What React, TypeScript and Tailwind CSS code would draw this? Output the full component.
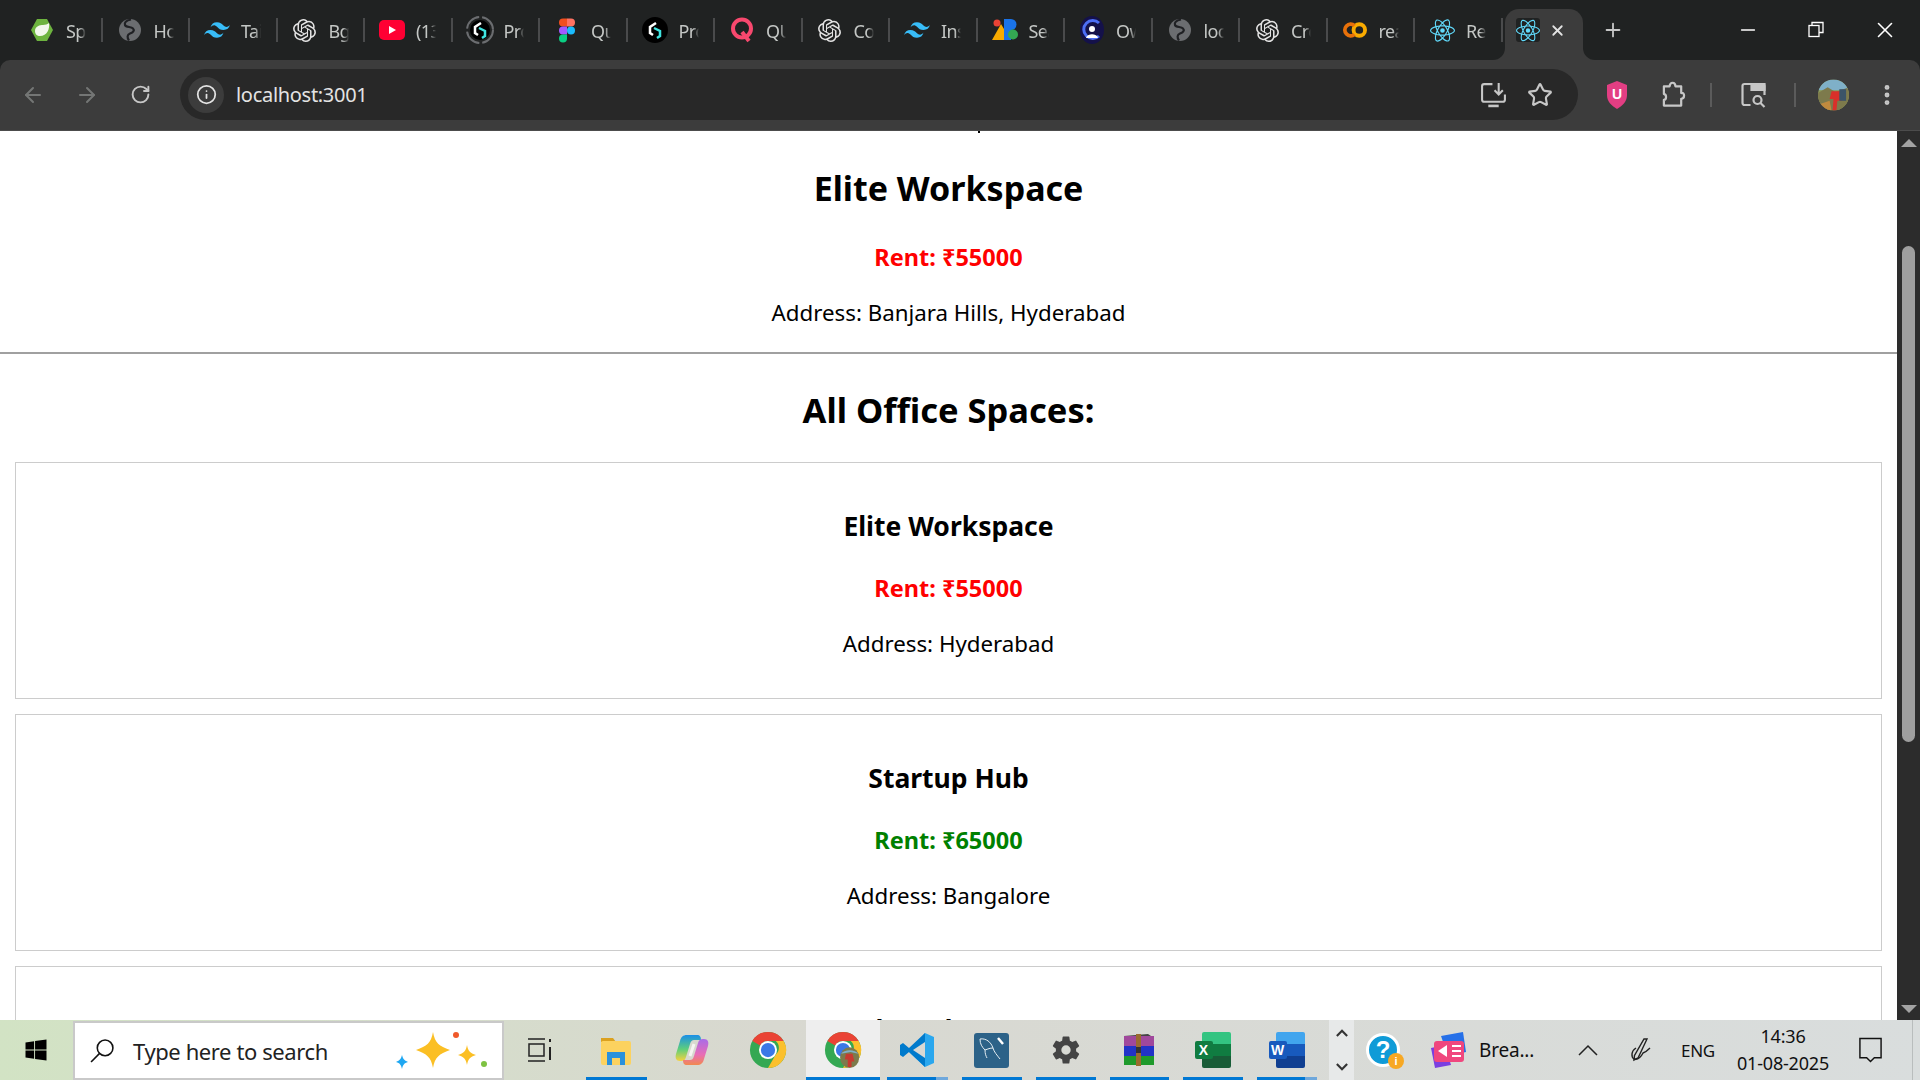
import React from 'react';
import { ArrowLeft, ArrowRight, RotateCw, Info, Star, EllipsisVertical, X, Plus, Minus } from 'lucide-react';
import { SiOpenai, SiTailwindcss, SiReact } from 'react-icons/si';
import { FaWindows } from 'react-icons/fa';
import { IoSettingsSharp } from 'react-icons/io5';

const pageFont = "font-['Noto_Sans',sans-serif]";

function Globe() {
    return (
        <svg viewBox="0 0 24 24" className="w-[24px] h-[24px]">
            <circle cx="12" cy="12" r="11" fill="#6b6d70" />
            <path d="M13 1.500c-5 1-7 3-6 5.500s6 1.500 8 3.500 0 4-3 5-3 4-1 7" fill="none" stroke="#202124" strokeWidth="2.200" />
        </svg>
    );
}

function Spring() {
    return (
        <svg viewBox="0 0 24 24" className="w-[24px] h-[24px]">
            <path d="M7 1h10l6 11-6 11H7L1 12z" fill="#6db33f" />
            <path d="M19 5c1 6-2 13-9 13-3 0-5-2-5-5 0-5 5-6 8-6 2 0 5-1 6-2z" fill="#f2f7ec" />
        </svg>
    );
}

function LogoG({ ring }: { ring?: boolean }) {
    return (
        <svg viewBox="0 0 28 28" className="w-[28px] h-[28px]">
            {ring && <circle cx="14" cy="14" r="13" fill="none" stroke="#6b6d70" strokeWidth="2" strokeDasharray="18 3" />}
            <circle cx="14" cy="14" r={ring ? 10 : 13} fill="#000" />
            <path d="M15 7l-6 4v6l3 2" fill="none" stroke="#fff" strokeWidth="2.500" />
            <path d="M13 12l6 3v5l-3 2" fill="none" stroke="#3fe4e0" strokeWidth="2.500" />
        </svg>
    );
}

function Youtube() {
    return (
        <svg viewBox="0 0 26 22" className="w-[26px] h-[22px]">
            <rect width="26" height="20" y="1" rx="5" fill="#ff0033" />
            <path d="M10 7l7 4-7 4z" fill="#fff" />
        </svg>
    );
}

function Figma() {
    return (
        <svg viewBox="0 0 16 24" className="w-[16px] h-[25px]">
            <path d="M0 4a4 4 0 0 1 4-4h4v8H4a4 4 0 0 1-4-4z" fill="#f24e1e" />
            <path d="M8 0h4a4 4 0 0 1 0 8H8z" fill="#ff7262" />
            <path d="M0 12a4 4 0 0 1 4-4h4v8H4a4 4 0 0 1-4-4z" fill="#a259ff" />
            <circle cx="12" cy="12" r="4" fill="#1abcfe" />
            <path d="M0 20a4 4 0 0 1 4-4h4v4a4 4 0 0 1-8 0z" fill="#0acf83" />
        </svg>
    );
}

function QLogo() {
    return (
        <svg viewBox="0 0 24 26" className="w-[24px] h-[26px]">
            <circle cx="12" cy="11.500" r="9" fill="none" stroke="#f8486e" strokeWidth="4" />
            <path d="M12 15l7 9" stroke="#f8486e" strokeWidth="4" />
        </svg>
    );
}

function SeoLogo() {
    return (
        <svg viewBox="0 0 26 22" className="w-[26px] h-[22px]">
            <path d="M0 21L9 5l3 5v11z" fill="#f9ab00" />
            <circle cx="5" cy="4" r="3.500" fill="#ea4335" />
            <path d="M12 0h7a5 5 0 0 1 0 11h-7z" fill="#1a73e8" />
            <path d="M12 11h7v10h-7z" fill="#1a73e8" />
            <circle cx="21" cy="15.500" r="5" fill="#34a853" />
        </svg>
    );
}

function OwnerLogo() {
    return (
        <svg viewBox="0 0 24 28" className="w-[24px] h-[28px]">
            <ellipse cx="12" cy="14" rx="12" ry="14" fill="#14114a" />
            <path d="M19 7a9 9 0 1 0 0 13" fill="none" stroke="#4c6ef5" strokeWidth="3" />
            <circle cx="12" cy="13" r="3" fill="#fff" />
            <path d="M6 22c1-5 11-5 12 0z" fill="#fff" />
        </svg>
    );
}

function Tailwind() {
    return <SiTailwindcss className="w-[26px] h-[26px] text-[#38bdf8]" />;
}

function Knot() {
    return <SiOpenai className="w-[23px] h-[23px] text-[#e3e3e3]" />;
}

function ReactLogo() {
    return <SiReact className="w-[25px] h-[25px] text-[#61dafb]" />;
}

function Colab() {
    return (
        <svg viewBox="0 0 26 16" className="w-[25px] h-[16px]" fill="none" strokeWidth="4">
            <circle cx="18" cy="8" r="6" stroke="#f9ab00" />
            <path d="M13 3.500a6 6 0 1 0 0 9" stroke="#e8710a" />
        </svg>
    );
}

const tabs = [
    { icon: <Spring />, label: 'Spring' },
    { icon: <Globe />, label: 'Home' },
    { icon: <Tailwind />, label: 'Tailwind' },
    { icon: <Knot />, label: 'Bg' },
    { icon: <Youtube />, label: '(13' },
    { icon: <LogoG ring />, label: 'Profile' },
    { icon: <Figma />, label: 'Quiz' },
    { icon: <LogoG />, label: 'Profile' },
    { icon: <QLogo />, label: 'QUIZ' },
    { icon: <Knot />, label: 'Code' },
    { icon: <Tailwind />, label: 'Install' },
    { icon: <SeoLogo />, label: 'Search' },
    { icon: <OwnerLogo />, label: 'Owner' },
    { icon: <Globe />, label: 'local' },
    { icon: <Knot />, label: 'Create' },
    { icon: <Colab />, label: 'react' },
    { icon: <ReactLogo />, label: 'React' },
];

function TabStrip() {
    return (
        <div className="h-[60px] bg-[#202222] flex items-end pl-[15px] font-['Noto_Sans',sans-serif]">
            {tabs.map((tab, i) => (
                <div key={i} className="w-[87.500px] h-[60px] shrink-0 flex items-center">
                    <div className="w-[54px] flex justify-center">{tab.icon}</div>
                    <div className="-ml-[3px] w-[20px] overflow-hidden whitespace-nowrap text-[18px] tracking-[-0.6px] text-[#c4c7c5] pt-[2px] [mask-image:linear-gradient(to_right,black_70%,transparent)]">{tab.label}</div>
                    <div className="ml-auto w-[2px] h-[24px] bg-[#4a4b4c]" />
                </div>
            ))}
            {/* Active tab */}
            <div className="relative ml-[2.500px] w-[78px] h-[51px] shrink-0 bg-[#3c3c3c] rounded-t-[14px] flex items-start pt-[9px] pl-[11px] gap-[9px]">
                <div className="absolute -left-[12px] bottom-0 w-[12px] h-[12px] bg-[#3c3c3c]"><div className="w-full h-full bg-[#202222] rounded-br-[12px]" /></div>
                <div className="absolute -right-[12px] bottom-0 w-[12px] h-[12px] bg-[#3c3c3c]"><div className="w-full h-full bg-[#202222] rounded-bl-[12px]" /></div>
                <div className="w-[24px] h-[24px] bg-[#202222] rounded-[3px] flex items-center justify-center"><ReactLogo /></div>
                <X size={17} strokeWidth={2.500} className="text-[#e3e3e3] mt-[4px]" />
            </div>
            <div className="self-stretch flex items-center ml-[15px] w-[30px] justify-center">
                <Plus size={22} className="text-[#c7c7c7]" />
            </div>
            {/* Window controls */}
            <div className="ml-auto self-stretch flex items-center pb-[1px]">
                <div className="w-[68px] flex justify-center"><Minus size={22} strokeWidth={1.500} className="text-white" /></div>
                <div className="w-[68px] flex justify-center">
                    <svg viewBox="0 0 16 16" className="w-[16px] h-[17px]" fill="none" stroke="#fff" strokeWidth="1.300">
                        <rect x="1" y="4" width="10" height="11" />
                        <path d="M4 4V1h11v10h-4" />
                    </svg>
                </div>
                <div className="w-[70px] flex justify-center"><X size={26} strokeWidth={1.500} className="text-white" /></div>
            </div>
        </div>
    );
}

function Toolbar() {
    return (
        <div className="h-[71px] bg-[#3c3c3c] rounded-t-[10px] border-b border-[#4c4c4c] flex items-center pb-[1px] text-[#c7c7c7]">
            <div className="w-[180px] flex items-center">
                <div className="w-[60px] flex justify-center pl-[6px]"><ArrowLeft size={24} className="text-[#747675]" /></div>
                <div className="w-[50px] flex justify-center pl-[3px]"><ArrowRight size={24} className="text-[#747675]" /></div>
                <div className="w-[60px] flex justify-center"><RotateCw size={21} strokeWidth={2.200} className="text-[#c7c7c7]" /></div>
            </div>
            {/* Address bar */}
            <div className="w-[1398px] h-[51px] rounded-full bg-[#282828] flex items-center pl-[8px] pr-[25px]">
                <div className="w-[36px] h-[36px] rounded-full bg-[#3c3c3c] flex items-center justify-center">
                    <Info size={21} className="text-[#e3e3e3]" />
                </div>
                <span className="ml-[12px] text-[20px] tracking-[-0.3px] text-[#e3e3e3] font-['Noto_Sans',sans-serif]">localhost:3001</span>
                <div className="ml-auto flex items-center gap-[20px]">
                    <svg viewBox="0 0 26 26" className="w-[27px] h-[27px]" fill="none" stroke="#c7c7c7" strokeWidth="2">
                        <path d="M12 3H4a2 2 0 0 0-2 2v13a2 2 0 0 0 2 2h18a2 2 0 0 0 2-2v-5" />
                        <path d="M8 24h10" strokeWidth="2.500" />
                        <path d="M18 2v11M14 9l4 4 4-4" />
                    </svg>
                    <Star size={26} strokeWidth={2} />
                </div>
            </div>
            {/* Extensions and profile */}
            <div className="w-[78px] flex justify-end pr-[28px]">
                <svg viewBox="0 0 22 28" className="w-[22px] h-[28px]">
                    <path d="M11 0l10 4v10c0 7-5 11-10 14C6 25 1 21 1 14V4z" fill="#e33e83" />
                    <text x="11" y="18" textAnchor="middle" fontSize="14" fontWeight="700" fill="#fff" fontFamily="Liberation Sans, sans-serif">U</text>
                </svg>
            </div>
            <div className="w-[34px] flex justify-center">
                <svg viewBox="0 0 26 28" className="w-[25px] h-[28px] shrink-0" fill="none" stroke="#c7c7c7" strokeWidth="2.300">
                    <path d="M3 5h6c0-5 6-5 6 0h6v7c4-1 4 6 0 6v7H3v-6c3 0 3-6 0-6z" strokeLinejoin="round" />
                </svg>
            </div>
            <div className="w-[2px] h-[24px] bg-[#5b5b5b] ml-[20px]" />
            <div className="w-[82px] flex justify-center">
                <svg viewBox="0 0 26 26" className="w-[27px] h-[26px]" fill="none" stroke="#c7c7c7" strokeWidth="2.200">
                    <path d="M10 23H4a2 2 0 0 1-2-2V4a2 2 0 0 1 2-2h18a2 2 0 0 1 2 2v9" />
                    <path d="M11 2h13v6H11z" fill="#c7c7c7" />
                    <circle cx="17" cy="18" r="4" />
                    <path d="M20 21l4 4" />
                </svg>
            </div>
            <div className="w-[2px] h-[24px] bg-[#5b5b5b]" />
            <div className="w-[75px] flex justify-center">
                <svg viewBox="0 0 32 32" className="w-[31px] h-[32px]">
                    <defs>
                        <clipPath id="avatar"><circle cx="16" cy="16" r="16" /></clipPath>
                    </defs>
                    <g clipPath="url(#avatar)">
                        <rect width="32" height="32" fill="#8c9a5a" />
                        <rect width="32" height="11" fill="#7fb0c8" />
                        <path d="M0 14l10-6 8 5 14-5v24H0z" fill="#7d7a4c" />
                        <path d="M14 12h9l2 10h-5l-1 10h-4l1-12h-4z" fill="#d9302a" />
                        <rect x="22" y="10" width="7" height="12" fill="#3b5468" />
                        <path d="M0 26l12-4 2 10H0z" fill="#c08a3e" />
                    </g>
                </svg>
            </div>
            <div className="flex justify-center ml-[3px]"><EllipsisVertical size={26} strokeWidth={2.500} /></div>
        </div>
    );
}

function RentCard({ name, rent, address, rentClass }: { name: string; rent: string; address: string; rentClass: string }) {
    return (
        <div className="h-[237px] border border-[#cccccc] mb-[15px] pt-[41px] text-center">
            <h3 className="text-[26.500px] leading-[44px] font-bold">{name}</h3>
            <p className={`mt-[24px] text-[23.500px] leading-[32px] font-bold ${rentClass}`}>{rent}</p>
            <p className="mt-[24px] text-[22.300px] leading-[32px]">{address}</p>
        </div>
    );
}

function Page() {
    return (
        <div className={`flex-1 min-w-0 overflow-hidden bg-white text-black ${pageFont}`}>
            <div className="flex justify-center"><div className="w-[2px] h-[2px] bg-black ml-[60px]" /></div>
            <div className="text-center pt-[31px]">
                <h2 className="text-[34px] leading-[48px] font-bold">Elite Workspace</h2>
                <p className="mt-[29px] text-[23.500px] leading-[32px] font-bold text-[#ff0000]">Rent: ₹55000</p>
                <p className="mt-[24px] text-[22.300px] leading-[32px]">Address: Banjara Hills, Hyderabad</p>
            </div>
            <div className="mt-[23px] border-t-2 border-[#a0a0a0]" />
            <h2 className="mt-[32px] text-center text-[34.500px] leading-[48px] font-bold">All Office Spaces:</h2>
            <div className="mt-[28px] pl-[15px] pr-[15px]">
                <RentCard name="Elite Workspace" rent="Rent: ₹55000" address="Address: Hyderabad" rentClass="text-[#ff0000]" />
                <RentCard name="Startup Hub" rent="Rent: ₹65000" address="Address: Bangalore" rentClass="text-[#008000]" />
                <RentCard name="Shared Space" rent="Rent: ₹70000" address="Address: Chennai" rentClass="text-[#008000]" />
            </div>
        </div>
    );
}

function Scrollbar() {
    return (
        <div className="w-[23px] shrink-0 bg-[#2c2c2c] flex flex-col items-center pt-[8px] pb-[7px]">
            <div className="w-0 h-0 border-l-[8px] border-r-[8px] border-b-[8px] border-l-transparent border-r-transparent border-b-[#a3a3a3]" />
            <div className="mt-[99px] w-[13px] h-[496px] rounded-full bg-[#9f9f9f]" />
            <div className="mt-auto w-0 h-0 border-l-[8px] border-r-[8px] border-t-[8px] border-l-transparent border-r-transparent border-t-[#a3a3a3]" />
        </div>
    );
}

function Sparkles() {
    return (
        <svg viewBox="0 0 100 50" className="w-[100px] h-[50px]">
            <path d="M45 7c2 11 6 14 17 18-11 4-15 7-17 18-2-11-6-14-17-18 11-4 15-7 17-18z" fill="#fbbf24" />
            <path d="M79 20c1 6 3 8 9 10-6 2-8 4-9 10-1-6-3-8-9-10 6-2 8-4 9-10z" fill="#fbbf24" />
            <path d="M14 30c1 4 2 5 6 7-4 1-5 3-6 7-1-4-2-6-6-7 4-2 5-3 6-7z" fill="#1ea7f2" />
            <circle cx="68" cy="10" r="3" fill="#f0592a" />
            <circle cx="96" cy="39" r="3" fill="#7ec242" />
        </svg>
    );
}

function Chrome({ avatar }: { avatar?: boolean }) {
    return (
        <svg viewBox="0 0 40 40" className="w-[38px] h-[38px]">
            <circle cx="20" cy="20" r="19" fill="#34a853" />
            <path d="M20 1a19 19 0 0 1 16.500 9.500H20a9.500 9.500 0 0 0-8.200 4.700L3.500 10.500A19 19 0 0 1 20 1z" fill="#ea4335" />
            <path d="M36.500 10.500A19 19 0 0 1 20 39l8.200-14.200a9.500 9.500 0 0 0 0-14.300z" fill="#fbc02d" />
            <circle cx="20" cy="20" r="9.500" fill="#fff" />
            <circle cx="20" cy="20" r="7.500" fill="#3b78e7" />
            {avatar && (
                <g>
                    <ellipse cx="27" cy="28" rx="10" ry="11" fill="#7d7a4c" />
                    <path d="M23 24h7l2 8h-3v6h-4v-8h-3z" fill="#c73a30" />
                    <path d="M18 24c3-5 15-5 18 0l-8-2z" fill="#7fb0c8" />
                </g>
            )}
        </svg>
    );
}

function Copilot() {
    return (
        <svg viewBox="0 0 36 36" className="w-[36px] h-[36px]">
            <defs>
                <linearGradient id="cp1" x1="0" y1="0" x2="0" y2="1"><stop offset="0" stopColor="#1a8fe8" /><stop offset="0.55" stopColor="#5fcf7a" /><stop offset="1" stopColor="#f6d23f" /></linearGradient>
                <linearGradient id="cp2" x1="0" y1="0" x2="0" y2="1"><stop offset="0" stopColor="#a86de8" /><stop offset="0.6" stopColor="#e86db6" /><stop offset="1" stopColor="#f2894f" /></linearGradient>
            </defs>
            <path d="M13 3h10c3 0 4 2 4 5H20c-2 0-3 1-4 4l-4 13c-1 3-2 4-5 4H6c-4 0-5-3-4-7l4-13C7 5 9 3 13 3z" fill="url(#cp1)" />
            <path d="M23 33H13c-3 0-4-2-4-5h7c2 0 3-1 4-4l4-13c1-3 2-4 5-4h1c4 0 5 3 4 7l-4 13c-1 4-3 6-7 6z" fill="url(#cp2)" />
            <path d="M20 12l-4 12" stroke="#f5f5f2" strokeWidth="3" />
        </svg>
    );
}

function Office({ letter, dark, mid, light, tile }: { letter: string; dark: string; mid: string; light: string; tile: string }) {
    return (
        <div className="relative w-[36px] h-[36px]">
            <div className="absolute left-[7px] top-0 right-0 bottom-0 rounded-[2px] overflow-hidden flex flex-col">
                <div className="flex-1" style={{ background: light }} />
                <div className="flex-1" style={{ background: mid }} />
                <div className="flex-1" style={{ background: dark }} />
            </div>
            <div className="absolute left-0 top-[9px] w-[18px] h-[18px] rounded-[2px] flex items-center justify-center text-white font-bold text-[14px] font-['Liberation_Sans',sans-serif]" style={{ background: tile }}>{letter}</div>
        </div>
    );
}

const taskItems = [
    {
        width: 'w-[74.500px]',
        icon: (
            <svg viewBox="0 0 28 28" className="w-[28px] h-[28px] -ml-[3px]" fill="none" stroke="#222" strokeWidth="1.500">
                <path d="M2 3h17M2 25h17" />
                <rect x="3" y="8" width="15" height="12" />
                <path d="M24 3v3M24 11v13" strokeWidth="2" />
            </svg>
        ),
    },
    {
        width: 'w-[75px]',
        bar: true,
        icon: (
            <svg viewBox="0 0 34 34" className="w-[34px] h-[34px]">
                <path d="M2 5h12l3 4H2z" fill="#dba11f" />
                <rect x="2" y="8" width="30" height="24" rx="2" fill="#fcd25f" />
                <path d="M8 19h18v13h-5v-7h-8v7H8z" fill="#2a91dc" />
            </svg>
        ),
    },
    { width: 'w-[77px]', icon: <Copilot /> },
    { width: 'w-[75px]', icon: <Chrome /> },
    { width: 'w-[74px]', icon: <Chrome avatar />, bar: true, active: true },
    {
        width: 'w-[75px]',
        bar: true,
        split: true,
        icon: (
            <svg viewBox="0 0 36 36" className="w-[36px] h-[36px]">
                <path d="M26 1l9 4v26l-9 4-16-15z" fill="#2aa7ee" />
                <path d="M26 1v34L10 20 4 25l-3-2V13l3-2 6 5z" fill="#007acc" />
                <path d="M26 10L14 18l12 8z" fill="#d8d8d4" />
            </svg>
        ),
    },
    {
        width: 'w-[74px]',
        bar: true,
        icon: (
            <div className="w-[35px] h-[35px] rounded-[3px] bg-[#2c6288] relative overflow-hidden">
                <svg viewBox="0 0 35 35" className="w-[35px] h-[35px]" fill="none" stroke="#e4edf2" strokeWidth="1">
                    <path d="M6 6c6-1 11 3 13 9 1 4 4 7 7 11M6 6c0 5 2 8 5 11 0 4 1 6 2 8M19 15c-3 0-5 1-8 2" />
                    <path d="M24 5l5 6" stroke="#fff" strokeWidth="2.500" />
                </svg>
            </div>
        ),
    },
    { width: 'w-[74px]', bar: true, icon: <IoSettingsSharp className="w-[30px] h-[30px] text-[#444444]" /> },
    {
        width: 'w-[73px]',
        bar: true,
        icon: (
            <svg viewBox="0 0 32 34" className="w-[32px] h-[34px]">
                <path d="M1 3l24-2 6 4-24 2z" fill="#444" />
                <rect x="1" y="3" width="30" height="10" fill="#a0489c" />
                <rect x="1" y="13" width="30" height="10" fill="#2233c8" />
                <rect x="1" y="23" width="30" height="9" fill="#1f9a2c" />
                <rect x="13" y="1" width="5" height="32" fill="#9b6b2f" />
                <rect x="13" y="14" width="5" height="6" fill="#333" />
            </svg>
        ),
    },
    { width: 'w-[74px]', bar: true, icon: <Office letter="X" dark="#185c37" mid="#107c41" light="#33c481" tile="#107c41" /> },
    { width: 'w-[74px]', bar: true, split: true, icon: <Office letter="W" dark="#103f91" mid="#185abd" light="#41a5ee" tile="#185abd" /> },
];

function Taskbar() {
    return (
        <div className="h-[60px] shrink-0 flex items-stretch bg-gradient-to-r from-[#d2e3c4] via-[#d8d8d0] via-40% to-[#d9dddd] text-[#111] font-['Noto_Sans',sans-serif]">
            <div className="w-[73px] flex items-center justify-center pr-[2px]"><FaWindows className="w-[24px] h-[24px] text-black" /></div>
            {/* Search box */}
            <div className="w-[431px] mt-[1px] bg-white border-2 border-[#c9c9c9] flex items-center pl-[15px]">
                <svg viewBox="0 0 24 24" className="w-[25px] h-[25px]" fill="none" stroke="#111" strokeWidth="1.500">
                    <circle cx="14.500" cy="9.500" r="7.500" />
                    <path d="M9 15l-8 8" />
                </svg>
                <span className="ml-[18px] text-[22px] tracking-[-0.4px] text-[#222] pt-[1px]">Type here to search</span>
                <div className="ml-auto pr-[14px] mt-[-2px]"><Sparkles /></div>
            </div>
            {/* Pinned apps */}
            {taskItems.map((item, i) => (
                <div key={i} className={`relative ${item.width} flex items-center justify-center ${item.active ? 'bg-[#eeeeee]' : ''}`}>
                    {item.icon}
                    {item.bar && (
                        <div className={`absolute bottom-0 h-[3px] bg-[#0078d4] ${item.active ? 'inset-x-0' : 'inset-x-[7px]'}`}>
                            {item.split && <div className="ml-auto w-[12px] h-full bg-[#6fa8dc]" />}
                        </div>
                    )}
                </div>
            ))}
            <div className="w-[5.500px]" />
            {/* Tray scroll arrows */}
            <div className="w-[25px] bg-[#e7e9e9] flex flex-col items-center justify-between py-[9px]">
                <svg viewBox="0 0 14 9" className="w-[12px] h-[8px]" fill="none" stroke="#333" strokeWidth="2.500"><path d="M1 8l6-6 6 6" /></svg>
                <svg viewBox="0 0 14 9" className="w-[12px] h-[8px]" fill="none" stroke="#333" strokeWidth="2.500"><path d="M1 1l6 6 6-6" /></svg>
            </div>
            <div className="w-[58px] flex items-center justify-center">
                <div className="relative w-[34px] h-[34px] rounded-full bg-[#0f9bd7] border-[3px] border-white flex items-center justify-center text-white font-bold text-[24px] font-['Liberation_Sans',sans-serif]">
                    ?
                    <div className="absolute -right-[7px] -bottom-[5px] w-[16px] h-[16px] rounded-full bg-[#f7a823] flex items-center justify-center text-[11px] leading-none">i</div>
                </div>
            </div>
            <div className="w-[67px] flex items-center justify-center pl-[7px]">
                <svg viewBox="0 0 36 36" className="w-[36px] h-[36px]">
                    <path d="M10 4L32 0l3 20-18 4z" fill="#2670e8" />
                    <path d="M0 16l14-3 6 20-16 3z" fill="#7a3fe0" />
                    <rect x="3" y="9" width="30" height="21" rx="3" fill="#f0477e" />
                    <path d="M7 19l9-6v12z" fill="#fff" />
                    <path d="M21 14h9M21 19h9M21 24h9" stroke="#fff" strokeWidth="2" />
                </svg>
            </div>
            <div className="w-[77px] flex items-center text-[19px] pt-[1px] whitespace-nowrap tracking-[-0.2px]">Brea...</div>
            <div className="w-[64px] flex items-center justify-center">
                <svg viewBox="0 0 20 12" className="w-[20px] h-[12px]" fill="none" stroke="#222" strokeWidth="1.500"><path d="M1 11l9-9 9 9" /></svg>
            </div>
            <div className="w-[42px] flex items-center justify-center">
                <svg viewBox="0 0 22 24" className="w-[22px] h-[24px]" fill="none" stroke="#222" strokeWidth="1.400">
                    <path d="M17 1L8 20l-4 2 .5-4.500L14 1z" />
                    <path d="M6 10c-5 3-5 9-2 11 4 1 7-2 9-6 3-1 5-3 7-5" />
                </svg>
            </div>
            <div className="w-[72px] flex items-center justify-center text-[17px] tracking-[-0.3px] pt-[1px]">ENG</div>
            <div className="w-[98px] flex flex-col items-center justify-center text-[18px] leading-[27px] tracking-[-0.2px]">
                <span>14:36</span>
                <span className="whitespace-nowrap">01-08-2025</span>
            </div>
            <div className="w-[76px] flex items-center justify-center">
                <svg viewBox="0 0 26 28" className="w-[25px] h-[28px]" fill="none" stroke="#111" strokeWidth="1.500"><path d="M2 2h22v20h-7l-4 4-4-4H2z" /></svg>
            </div>
            <div className="ml-auto w-[8px] border-l border-[#b9bdbd]" />
        </div>
    );
}

export default function App() {
    return (
        <div className="h-screen flex flex-col overflow-hidden bg-[#202222]">
            <TabStrip />
            <Toolbar />
            <div className="flex-1 min-h-0 flex">
                <Page />
                <Scrollbar />
            </div>
            <Taskbar />
        </div>
    );
}
